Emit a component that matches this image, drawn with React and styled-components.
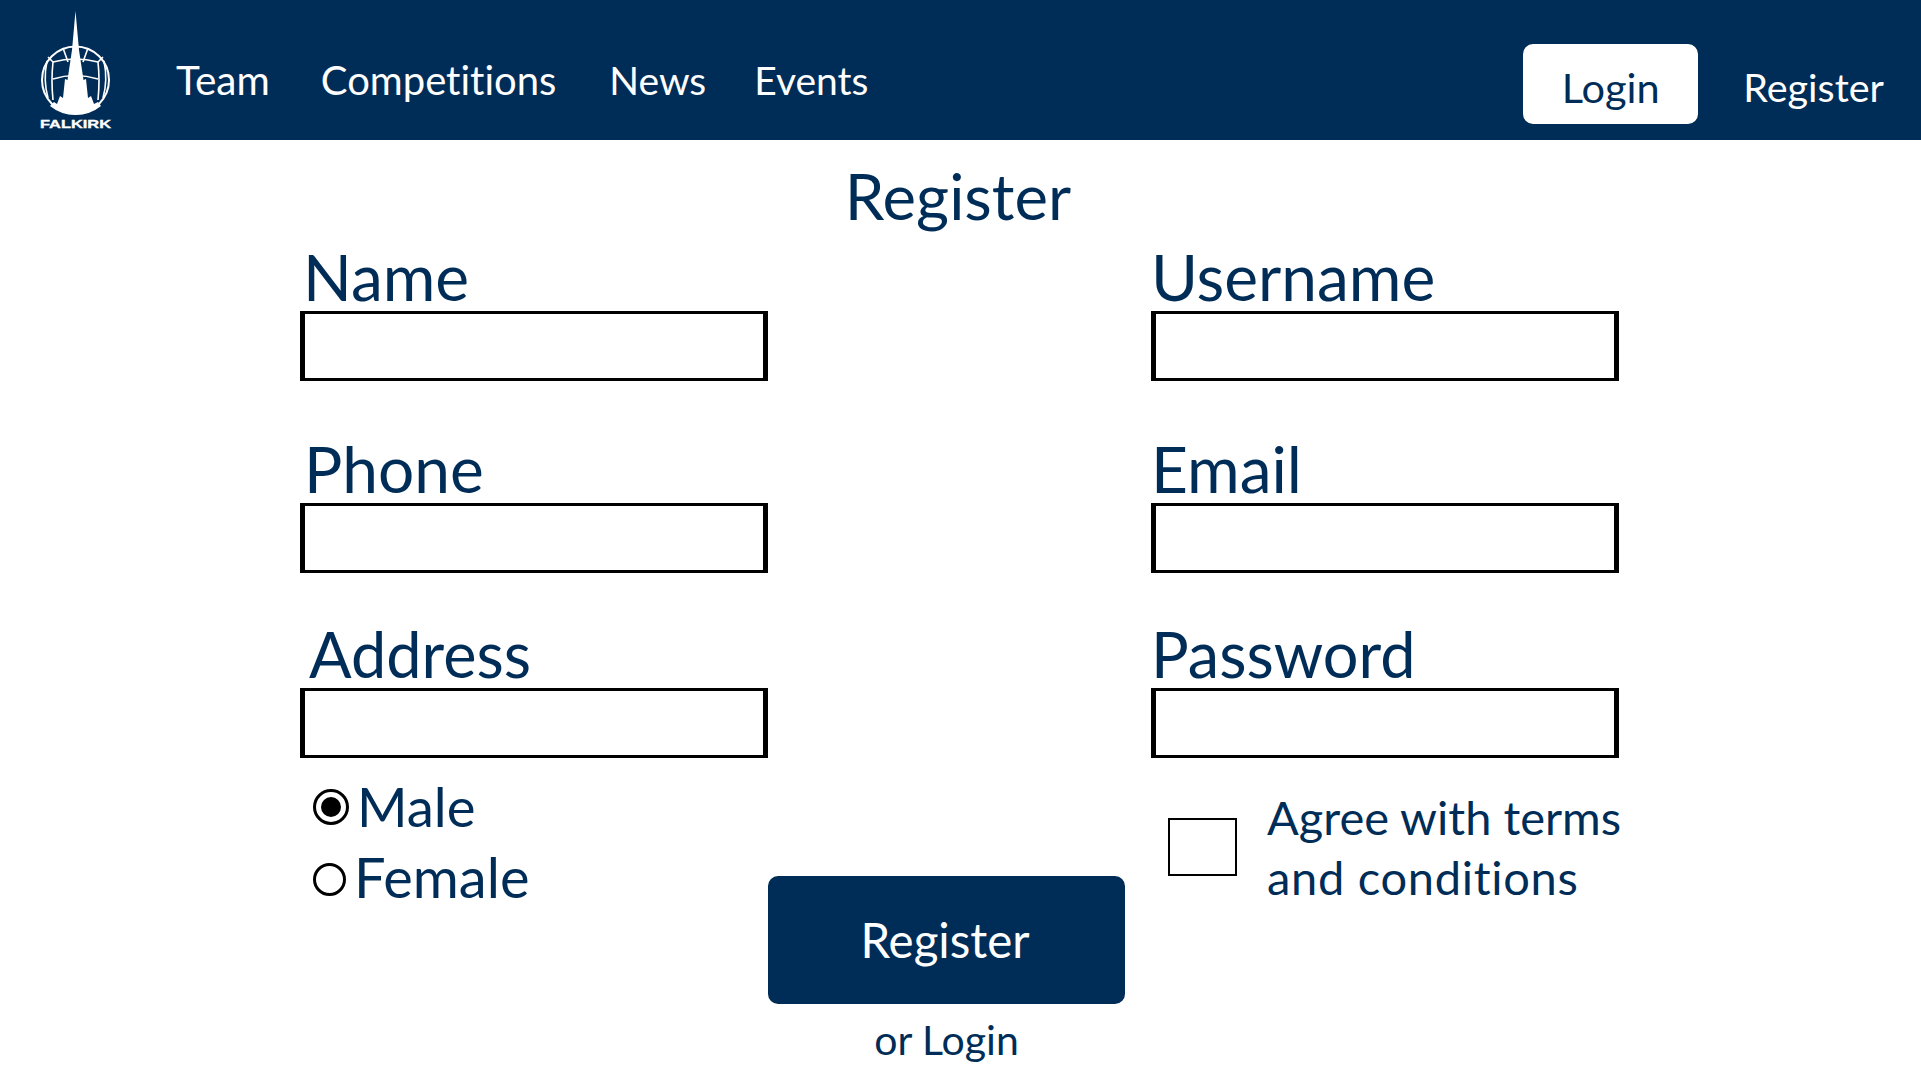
import React from 'react';
import styled, { createGlobalStyle } from 'styled-components';

const navy = '#002d57';

const GlobalStyle = createGlobalStyle`
  html, body {
    margin: 0;
    background: #fff;
    font-family: Lato, "Noto Sans", sans-serif;
    font-variant-ligatures: none;
    color: ${navy};
  }
  * { box-sizing: border-box; }
`;

const Page = styled.div`
  width: 1921px;
  height: 1080px;
  overflow: hidden;
`;

const Header = styled.header`
  display: flex;
  align-items: flex-start;
  height: 140px;
  padding: 10px 37px 0 38px;
  background: ${navy};
`;

const LogoMark = styled.svg`
  display: block;
  width: 76px;
  height: 120px;
  flex: none;
`;

const NavLinks = styled.nav`
  display: flex;
  margin: 46px 0 0 62px;
`;

const NavLink = styled.a`
  color: #fff;
  font-size: ${({ $size }) => $size || 40}px;
  line-height: 48px;
  margin-left: ${({ $gap }) => $gap}px;
`;

const AuthLinks = styled.div`
  display: flex;
  align-items: center;
  gap: 45px;
  margin: 34px 0 0 auto;
`;

const LoginButton = styled.a`
  display: flex;
  align-items: center;
  justify-content: center;
  width: 175px;
  height: 80px;
  padding-top: 5px;
  border-radius: 10px;
  background: #fff;
  color: ${navy};
  font-size: 41.5px;
`;

const RegisterLink = styled.a`
  padding-top: 5px;
  color: #fff;
  font-size: 39.5px;
`;

const Title = styled.h1`
  margin: 17px 0 0;
  padding-right: 5px;
  font-size: 63.5px;
  font-weight: 400;
  line-height: 78px;
  text-align: center;
`;

const FormGrid = styled.form`
  display: grid;
  grid-template-columns: 468px 383px 468px;
  margin: 0 0 0 300px;
`;

const Field = styled.div`
  display: flex;
  flex-direction: column;
  padding-top: ${({ $top }) => $top}px;
`;

const FieldLabel = styled.label`
  height: 63px;
  padding-left: ${({ $indent }) => $indent}px;
  font-size: ${({ $size }) => $size || 64}px;
  line-height: 58px;
`;

const TextInput = styled.input`
  display: block;
  width: 468px;
  height: 70px;
  padding: 0;
  border-style: solid;
  border-color: #000;
  border-width: 3px 5px;
  border-radius: 0;
  background: #fff;
`;

const GenderGroup = styled.div`
  display: flex;
  flex-direction: column;
  gap: 15px;
  padding: 21px 0 0 13px;
`;

const GenderRow = styled.div`
  display: flex;
  align-items: center;
  gap: 8px;
  height: 55px;
  font-size: ${({ $size }) => $size}px;
  line-height: 55px;
`;

const RadioMark = styled.span`
  display: flex;
  align-items: center;
  justify-content: center;
  width: ${({ $size }) => $size}px;
  height: ${({ $size }) => $size}px;
  flex: none;
  margin-top: ${({ $drop }) => $drop || 0}px;
  border: 3px solid #000;
  border-radius: 50%;

  &::after {
    content: '';
    display: ${({ $checked }) => ($checked ? 'block' : 'none')};
    width: 20px;
    height: 20px;
    border-radius: 50%;
    background: #000;
  }
`;

const SubmitColumn = styled.div`
  display: flex;
  flex-direction: column;
  align-items: center;
  width: 357px;
  padding-top: 118px;
`;

const SubmitButton = styled.button`
  width: 357px;
  height: 128px;
  padding: 0 3px 2px 0;
  border: 0;
  border-radius: 10px;
  background: ${navy};
  color: #fff;
  font-family: inherit;
  font-size: 47.5px;
`;

const LoginHint = styled.div`
  margin-top: 11px;
  font-size: 41px;
  line-height: 50px;
`;

const TermsRow = styled.div`
  display: flex;
  align-self: start;
  align-items: center;
  gap: 30px;
  padding: 29px 0 0 17px;
`;

const TermsBox = styled.span`
  width: 69px;
  height: 58px;
  flex: none;
  border: 2px solid #000;
`;

const TermsText = styled.div`
  width: 380px;
  font-size: 47px;
  line-height: 60px;
  white-space: nowrap;
`;

const TermsLine = styled.div`
  letter-spacing: ${({ $spacing }) => $spacing || 0}px;
`;

function Logo() {
  return (
    <LogoMark viewBox="38 10 76 120" aria-label="Falkirk logo">
      <circle cx="75.5" cy="80" r="33.5" fill="none" stroke="#fff" strokeWidth="2" />
      <g fill="none" stroke="#fff" strokeWidth="1.6">
        <path d="M53 62Q75 56 98 62" />
        <path d="M53 79Q75 72 98 79" />
        <path d="M53 62Q51 80 53 100" />
        <path d="M98 62Q100 80 98 100" />
        <path d="M63 48L68 62M88 48L83 62" />
        <path d="M47 61Q43 80 48 98M104 61Q108 80 103 98" />
        <path d="M48 57L53 62M103 57L98 62" />
      </g>
      <path
        fill="#fff"
        d="M75.5 11L79 50L83.5 80L86 79L88 98L91 96L94 104L98 102L101 106Q90 115 75.5 115Q61 115 50 106L54 102L57 104L60 96L63 98L65 79L67.5 80L72 50Z"
      />
      <text
        x="75.5"
        y="128"
        textAnchor="middle"
        fill="#fff"
        stroke="#fff"
        strokeWidth="0.3"
        fontFamily='"Liberation Sans", sans-serif'
        fontWeight="700"
        fontSize="11"
        textLength="71"
        lengthAdjust="spacingAndGlyphs"
      >
        FALKIRK
      </text>
    </LogoMark>
  );
}

export default function App() {
  return (
    <Page>
      <GlobalStyle />
      <Header>
        <Logo />
        <NavLinks>
          <NavLink $gap={0} $size={40.5}>Team</NavLink>
          <NavLink $gap={51}>Competitions</NavLink>
          <NavLink $gap={53} $size={39}>News</NavLink>
          <NavLink $gap={48} $size={39}>Events</NavLink>
        </NavLinks>
        <AuthLinks>
          <LoginButton>Login</LoginButton>
          <RegisterLink>Register</RegisterLink>
        </AuthLinks>
      </Header>
      <Title>Register</Title>
      <FormGrid>
        <Field $top={13}>
          <FieldLabel $indent={3}>Name</FieldLabel>
          <TextInput />
        </Field>
        <span />
        <Field $top={13}>
          <FieldLabel $indent={0}>Username</FieldLabel>
          <TextInput />
        </Field>
        <Field $top={59}>
          <FieldLabel $indent={4}>Phone</FieldLabel>
          <TextInput />
        </Field>
        <span />
        <Field $top={59}>
          <FieldLabel $indent={0}>Email</FieldLabel>
          <TextInput />
        </Field>
        <Field $top={52}>
          <FieldLabel $indent={9} $size={63}>Address</FieldLabel>
          <TextInput />
        </Field>
        <span />
        <Field $top={52}>
          <FieldLabel $indent={0} $size={63}>Password</FieldLabel>
          <TextInput />
        </Field>
        <GenderGroup>
          <GenderRow $size={54.5}>
            <RadioMark $size={36} $checked />
            Male
          </GenderRow>
          <GenderRow $size={56}>
            <RadioMark $size={33} $drop={5} />
            Female
          </GenderRow>
        </GenderGroup>
        <SubmitColumn>
          <SubmitButton type="button">Register</SubmitButton>
          <LoginHint>or Login</LoginHint>
        </SubmitColumn>
        <TermsRow>
          <TermsBox />
          <TermsText>
            <TermsLine>Agree with terms</TermsLine>
            <TermsLine $spacing={0.7}>and conditions</TermsLine>
          </TermsText>
        </TermsRow>
      </FormGrid>
    </Page>
  );
}
